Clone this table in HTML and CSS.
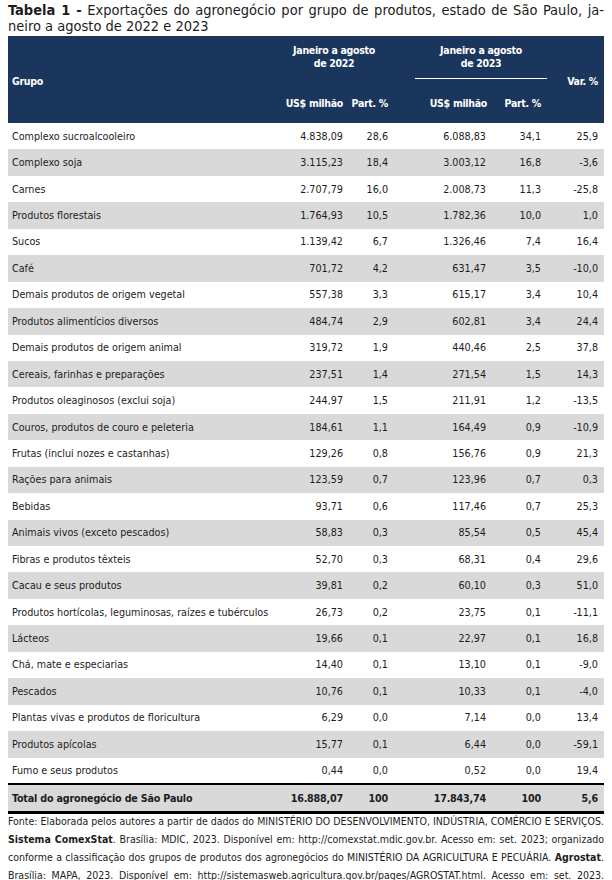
FILE: index.html
```html
<!DOCTYPE html>
<html lang="pt-BR">
<head>
<meta charset="utf-8">
<title>Tabela 1</title>
<link rel="stylesheet" href="styles.css">
</head>
<body>
<div class="page">
  <p class="title"><span class="line"><b>Tabela 1 -</b> Exportações do agronegócio por grupo de produtos, estado de São Paulo, ja-</span><span class="line last">neiro a agosto de 2022 e 2023</span></p>
  <table class="data">
    <colgroup>
      <col class="c1"><col class="c2"><col class="c3"><col class="c4"><col class="c5"><col class="c6">
    </colgroup>
    <thead>
      <tr class="h1">
        <th rowspan="2" class="grp">Grupo</th>
        <th colspan="2" class="period p22"><div class="plabel">Janeiro a agosto<br>de 2022</div></th>
        <th colspan="2" class="period p23"><div class="plabel ruled">Janeiro a agosto<br>de 2023</div></th>
        <th rowspan="2" class="var">Var. %</th>
      </tr>
      <tr class="h2">
        <th class="num">US$ milhão</th>
        <th class="num">Part. %</th>
        <th class="num">US$ milhão</th>
        <th class="num">Part. %</th>
      </tr>
    </thead>
    <tbody>
      <tr><td>Complexo sucroalcooleiro</td><td>4.838,09</td><td>28,6</td><td>6.088,83</td><td>34,1</td><td>25,9</td></tr>
      <tr><td>Complexo soja</td><td>3.115,23</td><td>18,4</td><td>3.003,12</td><td>16,8</td><td>-3,6</td></tr>
      <tr><td>Carnes</td><td>2.707,79</td><td>16,0</td><td>2.008,73</td><td>11,3</td><td>-25,8</td></tr>
      <tr><td>Produtos florestais</td><td>1.764,93</td><td>10,5</td><td>1.782,36</td><td>10,0</td><td>1,0</td></tr>
      <tr><td>Sucos</td><td>1.139,42</td><td>6,7</td><td>1.326,46</td><td>7,4</td><td>16,4</td></tr>
      <tr><td>Café</td><td>701,72</td><td>4,2</td><td>631,47</td><td>3,5</td><td>-10,0</td></tr>
      <tr><td>Demais produtos de origem vegetal</td><td>557,38</td><td>3,3</td><td>615,17</td><td>3,4</td><td>10,4</td></tr>
      <tr><td>Produtos alimentícios diversos</td><td>484,74</td><td>2,9</td><td>602,81</td><td>3,4</td><td>24,4</td></tr>
      <tr><td>Demais produtos de origem animal</td><td>319,72</td><td>1,9</td><td>440,46</td><td>2,5</td><td>37,8</td></tr>
      <tr><td>Cereais, farinhas e preparações</td><td>237,51</td><td>1,4</td><td>271,54</td><td>1,5</td><td>14,3</td></tr>
      <tr><td>Produtos oleaginosos (exclui soja)</td><td>244,97</td><td>1,5</td><td>211,91</td><td>1,2</td><td>-13,5</td></tr>
      <tr><td>Couros, produtos de couro e peleteria</td><td>184,61</td><td>1,1</td><td>164,49</td><td>0,9</td><td>-10,9</td></tr>
      <tr><td>Frutas (inclui nozes e castanhas)</td><td>129,26</td><td>0,8</td><td>156,76</td><td>0,9</td><td>21,3</td></tr>
      <tr><td>Rações para animais</td><td>123,59</td><td>0,7</td><td>123,96</td><td>0,7</td><td>0,3</td></tr>
      <tr><td>Bebidas</td><td>93,71</td><td>0,6</td><td>117,46</td><td>0,7</td><td>25,3</td></tr>
      <tr><td>Animais vivos (exceto pescados)</td><td>58,83</td><td>0,3</td><td>85,54</td><td>0,5</td><td>45,4</td></tr>
      <tr><td>Fibras e produtos têxteis</td><td>52,70</td><td>0,3</td><td>68,31</td><td>0,4</td><td>29,6</td></tr>
      <tr><td>Cacau e seus produtos</td><td>39,81</td><td>0,2</td><td>60,10</td><td>0,3</td><td>51,0</td></tr>
      <tr><td>Produtos hortícolas, leguminosas, raízes e tubérculos</td><td>26,73</td><td>0,2</td><td>23,75</td><td>0,1</td><td>-11,1</td></tr>
      <tr><td>Lácteos</td><td>19,66</td><td>0,1</td><td>22,97</td><td>0,1</td><td>16,8</td></tr>
      <tr><td>Chá, mate e especiarias</td><td>14,40</td><td>0,1</td><td>13,10</td><td>0,1</td><td>-9,0</td></tr>
      <tr><td>Pescados</td><td>10,76</td><td>0,1</td><td>10,33</td><td>0,1</td><td>-4,0</td></tr>
      <tr><td>Plantas vivas e produtos de floricultura</td><td>6,29</td><td>0,0</td><td>7,14</td><td>0,0</td><td>13,4</td></tr>
      <tr><td>Produtos apícolas</td><td>15,77</td><td>0,1</td><td>6,44</td><td>0,0</td><td>-59,1</td></tr>
      <tr><td>Fumo e seus produtos</td><td>0,44</td><td>0,0</td><td>0,52</td><td>0,0</td><td>19,4</td></tr>
    </tbody>
    <tfoot>
      <tr><td>Total do agronegócio de São Paulo</td><td>16.888,07</td><td>100</td><td>17.843,74</td><td>100</td><td>5,6</td></tr>
    </tfoot>
  </table>
  <p class="source">
    <span class="line">Fonte: Elaborada pelos autores a partir de dados do MINISTÉRIO DO DESENVOLVIMENTO, INDÚSTRIA, COMÉRCIO E SERVIÇOS.</span>
    <span class="line"><b>Sistema ComexStat</b>. Brasília: MDIC, 2023. Disponível em: http://comexstat.mdic.gov.br. Acesso em: set. 2023; organizado</span>
    <span class="line">conforme a classificação dos grupos de produtos dos agronegócios do MINISTÉRIO DA AGRICULTURA E PECUÁRIA. <b>Agrostat</b>.</span>
    <span class="line">Brasília: MAPA, 2023. Disponível em: http://sistemasweb.agricultura.gov.br/pages/AGROSTAT.html. Acesso em: set. 2023.</span>
  </p>
</div>
</body>
</html>
```

FILE: styles.css
```css
* { box-sizing: border-box; }
html, body { margin: 0; padding: 0; background: #ffffff; }
body {
  font-family: "DejaVu Sans Condensed", "DejaVu Sans", sans-serif;
  color: #1c1c1c;
}
.page { padding: 0 8px; width: 612px; }

.title {
  margin: 2px 0 0 0;
  font-size: 14.5px;
  line-height: 16px;
  height: 34px;
}
.line {
  display: block;
  white-space: nowrap;
  text-align: justify;
  text-align-last: justify;
}
.line.last { text-align-last: left; }

.data {
  width: 596px;
  border-collapse: collapse;
  table-layout: fixed;
  font-size: 10.7px;
}
.c1 { width: 274px; }
.c2 { width: 67px; }
.c3 { width: 45px; }
.c4 { width: 98px; }
.c5 { width: 55px; }
.c6 { width: 57px; }

thead th {
  background: #1b365d;
  color: #ffffff;
  font-weight: bold;
  font-size: 10.5px;
  letter-spacing: -0.3px;
  padding: 0;
  white-space: nowrap;
}
.h1 { height: 46px; }
.h2 { height: 41px; }
th.grp { text-align: left; padding: 3px 0 0 4px; vertical-align: middle; }
th.var { text-align: right; padding: 3px 6px 0 0; vertical-align: middle; }
th.period { vertical-align: top; padding-top: 8px; text-align: center; }
th.p22 { padding-right: 8px; }
th.p23 { padding-left: 21px; }
.plabel { line-height: 13px; padding-bottom: 8px; }
.plabel.ruled { border-bottom: 1.5px solid #ffffff; }
th.num { text-align: right; padding-right: 6px; vertical-align: middle; }
th.num:nth-child(3) { padding-right: 5px; }

tbody tr { height: 26.44px; }
tbody tr:nth-child(even) { background: #d9d9d9; }
td {
  padding: 0 6px 0 0;
  text-align: right;
  vertical-align: middle;
  white-space: nowrap;
}
td:first-child { text-align: left; padding-left: 4px; }

tfoot tr {
  height: 29px;
  background: #d9d9d9;
  font-weight: bold;
  letter-spacing: -0.2px;
  border-top: 2px solid #000000;
  border-bottom: 3px solid #000000;
}

.source {
  margin: -1px 0 0 0;
  padding: 0;
  font-size: 10.5px;
  line-height: 17.8px;
}
```
